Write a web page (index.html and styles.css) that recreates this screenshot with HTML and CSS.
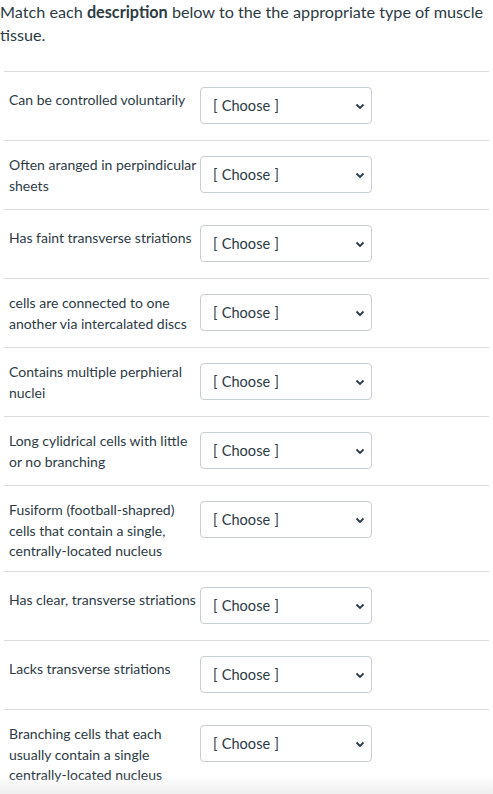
FILE: index.html
```html
<!DOCTYPE html>
<html>
<head>
<meta charset="utf-8">
<link rel="stylesheet" href="styles.css">
</head>
<body>
<div class="page">
  <p class="intro">Match each <strong>description</strong> below to the the appropriate type of muscle tissue.</p>
  <div class="answers">
    <div class="row"><div class="label single">Can be controlled voluntarily</div><div class="select"><span>[ Choose ]</span><svg width="10" height="7" viewBox="0 0 10 7"><path d="M1.5 1.5 L5 5 L8.5 1.5" fill="none" stroke="#2d3b45" stroke-width="1.8"/></svg></div></div>
    <div class="row"><div class="label">Often aranged in perpindicular sheets</div><div class="select"><span>[ Choose ]</span><svg width="10" height="7" viewBox="0 0 10 7"><path d="M1.5 1.5 L5 5 L8.5 1.5" fill="none" stroke="#2d3b45" stroke-width="1.8"/></svg></div></div>
    <div class="row"><div class="label single">Has faint transverse striations</div><div class="select"><span>[ Choose ]</span><svg width="10" height="7" viewBox="0 0 10 7"><path d="M1.5 1.5 L5 5 L8.5 1.5" fill="none" stroke="#2d3b45" stroke-width="1.8"/></svg></div></div>
    <div class="row"><div class="label">cells are connected to one another via intercalated discs</div><div class="select"><span>[ Choose ]</span><svg width="10" height="7" viewBox="0 0 10 7"><path d="M1.5 1.5 L5 5 L8.5 1.5" fill="none" stroke="#2d3b45" stroke-width="1.8"/></svg></div></div>
    <div class="row"><div class="label">Contains multiple perphieral nuclei</div><div class="select"><span>[ Choose ]</span><svg width="10" height="7" viewBox="0 0 10 7"><path d="M1.5 1.5 L5 5 L8.5 1.5" fill="none" stroke="#2d3b45" stroke-width="1.8"/></svg></div></div>
    <div class="row"><div class="label">Long cylidrical cells with little or no branching</div><div class="select"><span>[ Choose ]</span><svg width="10" height="7" viewBox="0 0 10 7"><path d="M1.5 1.5 L5 5 L8.5 1.5" fill="none" stroke="#2d3b45" stroke-width="1.8"/></svg></div></div>
    <div class="row"><div class="label">Fusiform (football-shapred) cells that contain a single, centrally-located nucleus</div><div class="select"><span>[ Choose ]</span><svg width="10" height="7" viewBox="0 0 10 7"><path d="M1.5 1.5 L5 5 L8.5 1.5" fill="none" stroke="#2d3b45" stroke-width="1.8"/></svg></div></div>
    <div class="row"><div class="label single">Has clear, transverse striations</div><div class="select"><span>[ Choose ]</span><svg width="10" height="7" viewBox="0 0 10 7"><path d="M1.5 1.5 L5 5 L8.5 1.5" fill="none" stroke="#2d3b45" stroke-width="1.8"/></svg></div></div>
    <div class="row"><div class="label single">Lacks transverse striations</div><div class="select"><span>[ Choose ]</span><svg width="10" height="7" viewBox="0 0 10 7"><path d="M1.5 1.5 L5 5 L8.5 1.5" fill="none" stroke="#2d3b45" stroke-width="1.8"/></svg></div></div>
    <div class="row"><div class="label">Branching cells that each usually contain a single centrally-located nucleus</div><div class="select"><span>[ Choose ]</span><svg width="10" height="7" viewBox="0 0 10 7"><path d="M1.5 1.5 L5 5 L8.5 1.5" fill="none" stroke="#2d3b45" stroke-width="1.8"/></svg></div></div>
  </div>
</div>
<div class="fade"></div>
</body>
</html>
```
FILE: styles.css
```css
html, body {
  margin: 0;
  padding: 0;
  background: #ffffff;
}
body {
  font-family: Lato, "Open Sans", sans-serif;
  color: #2d3b45;
  height: 794px;
  overflow: hidden;
}
.page {
  padding: 0 2px 0 0;
}
.intro {
  margin: 0;
  font-size: 16.2px;
  line-height: 23px;
  padding-top: 0;
}
.intro strong {
  font-weight: 700;
}
.answers {
  margin: 25px 2px 0 4px;
}
.row {
  display: flex;
  align-items: flex-start;
  border-top: 1px solid #dadcde;
  padding: 14px 0 9px 5px;
}
.label {
  width: 191px;
  font-size: 14px;
  line-height: 20.5px;
  margin-bottom: 0.5px;
  flex: none;
}
.label.single {
  padding-top: 4px;
}
.select {
  flex: none;
  box-sizing: border-box;
  width: 172px;
  height: 37px;
  margin: 1px 0 7px 0;
  border: 1px solid #c7cdd1;
  border-radius: 4px;
  display: flex;
  align-items: center;
  justify-content: space-between;
  padding: 0 6px 0 12px;
  font-size: 14.6px;
  background: #fff;
}
.select span {
  word-spacing: 0.5px;
}
.select svg {
  display: block;
  margin-top: 1px;
}
.fade {
  position: fixed;
  left: 0;
  right: 0;
  bottom: 0;
  height: 18px;
  background: linear-gradient(to bottom, rgba(235,235,235,0), rgba(235,235,235,0.8));
  pointer-events: none;
}
```
